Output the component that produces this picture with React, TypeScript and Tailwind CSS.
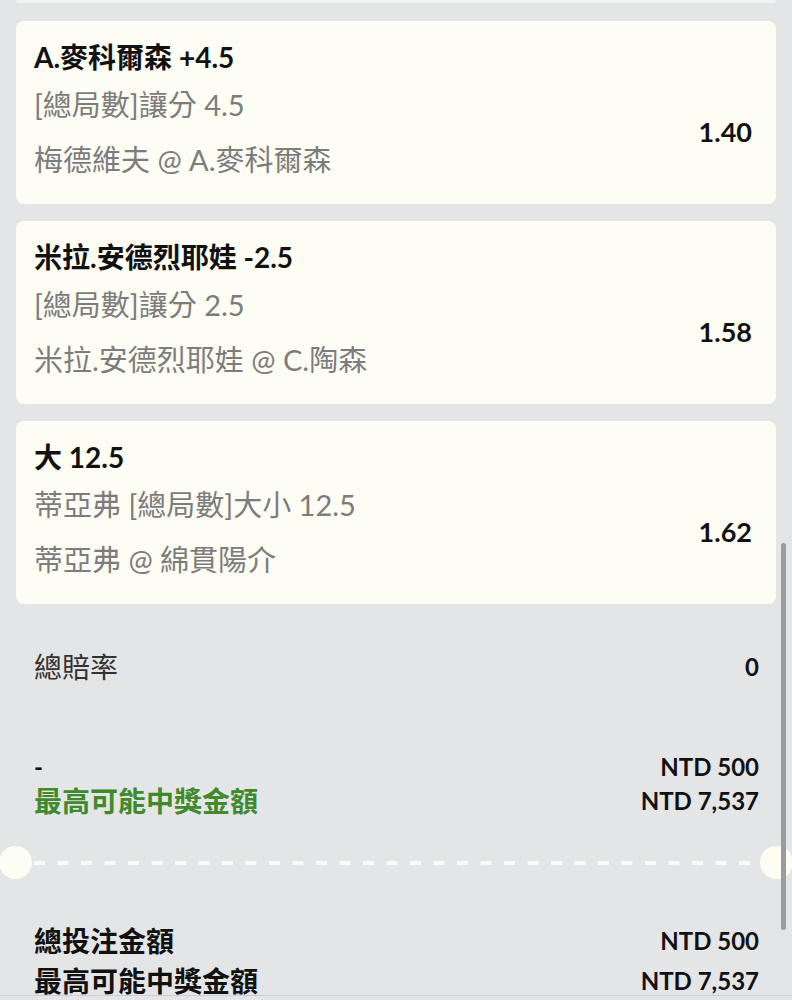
const bets = [
  {
    title: "A.麥科爾森 +4.5",
    market: "[總局數]讓分 4.5",
    match: "梅德維夫 @ A.麥科爾森",
    odds: "1.40",
  },
  {
    title: "米拉.安德烈耶娃 -2.5",
    market: "[總局數]讓分 2.5",
    match: "米拉.安德烈耶娃 @ C.陶森",
    odds: "1.58",
  },
  {
    title: "大 12.5",
    market: "蒂亞弗 [總局數]大小 12.5",
    match: "蒂亞弗 @ 綿貫陽介",
    odds: "1.62",
  },
];

const font = "font-['Lato','Noto_Sans_CJK_TC',sans-serif]";

export default function App() {
  return (
    <div className={`relative h-[1000px] overflow-hidden bg-[#e4e5e7] ${font}`}>
      <div className="mx-4 h-[3px] rounded-b bg-[#f3f3f1]" />

      <div className="mt-[18px] flex flex-col gap-[17px] px-4">
        {bets.map((b) => (
          <div key={b.odds} className="h-[183px] rounded-lg bg-[#fefdf4] pl-[18px] pr-6 pt-5">
            <div className="text-[28px] leading-8 font-bold text-[#111]">{b.title}</div>
            <div className="mt-[14px] flex items-center justify-between">
              <div className="text-[29px] text-[#7c7c7c]">
                <div className="leading-9">{b.market}</div>
                <div className="mt-[19px] leading-9">{b.match}</div>
              </div>
              <div className="text-[27px] font-bold text-[#111]">{b.odds}</div>
            </div>
          </div>
        ))}
      </div>

      <div className="mt-[45px] flex items-center justify-between pl-[34px] pr-[33px]">
        <span className="text-[28px] leading-9 text-[#333]">總賠率</span>
        <span className="text-[24px] font-bold text-[#111]">0</span>
      </div>

      <div className="mt-[66px] flex items-end justify-between pl-[34px] pr-[33px]">
        <div className="flex flex-col">
          <span className="text-[24px] leading-[32px] font-bold text-[#111]">-</span>
          <span className="text-[28px] leading-[36px] font-bold text-[#3f8a2d]">最高可能中獎金額</span>
        </div>
        <div className="flex flex-col items-end text-[24px] font-bold text-[#111]">
          <span className="leading-[32px]">NTD 500</span>
          <span className="leading-[36px]">NTD 7,537</span>
        </div>
      </div>

      <div className="mt-[27px] flex items-center">
        <div className="h-[33px] w-[33px] shrink-0 -ml-[1px] rounded-full bg-[#fefdf4]" />
        <svg className="mx-[2px] h-[4px] flex-1" preserveAspectRatio="none">
          <line x1="0" y1="2" x2="100%" y2="2" stroke="#fafaf8" strokeWidth="4" strokeDasharray="11 12.5" />
        </svg>
        <div className="h-[33px] w-[33px] shrink-0 -mr-[1px] rounded-full bg-[#fefdf4]" />
      </div>

      <div className="mt-[44px] flex flex-col gap-1 pl-[34px] pr-[33px]">
        <div className="flex items-center justify-between">
          <span className="text-[28px] leading-9 font-bold text-[#111]">總投注金額</span>
          <span className="text-[24px] font-bold text-[#111]">NTD 500</span>
        </div>
        <div className="flex items-center justify-between">
          <span className="text-[28px] leading-9 font-bold text-[#111]">最高可能中獎金額</span>
          <span className="text-[24px] font-bold text-[#111]">NTD 7,537</span>
        </div>
      </div>

      <div className="absolute left-0 right-0 top-[995px] h-[5px] border-t border-[#cfcfcf] bg-[#e4e5e7]" />
      <div className="absolute right-[6px] top-[543px] h-[387px] w-[5px] rounded-full bg-[#9b9b9b]" />
    </div>
  );
}
